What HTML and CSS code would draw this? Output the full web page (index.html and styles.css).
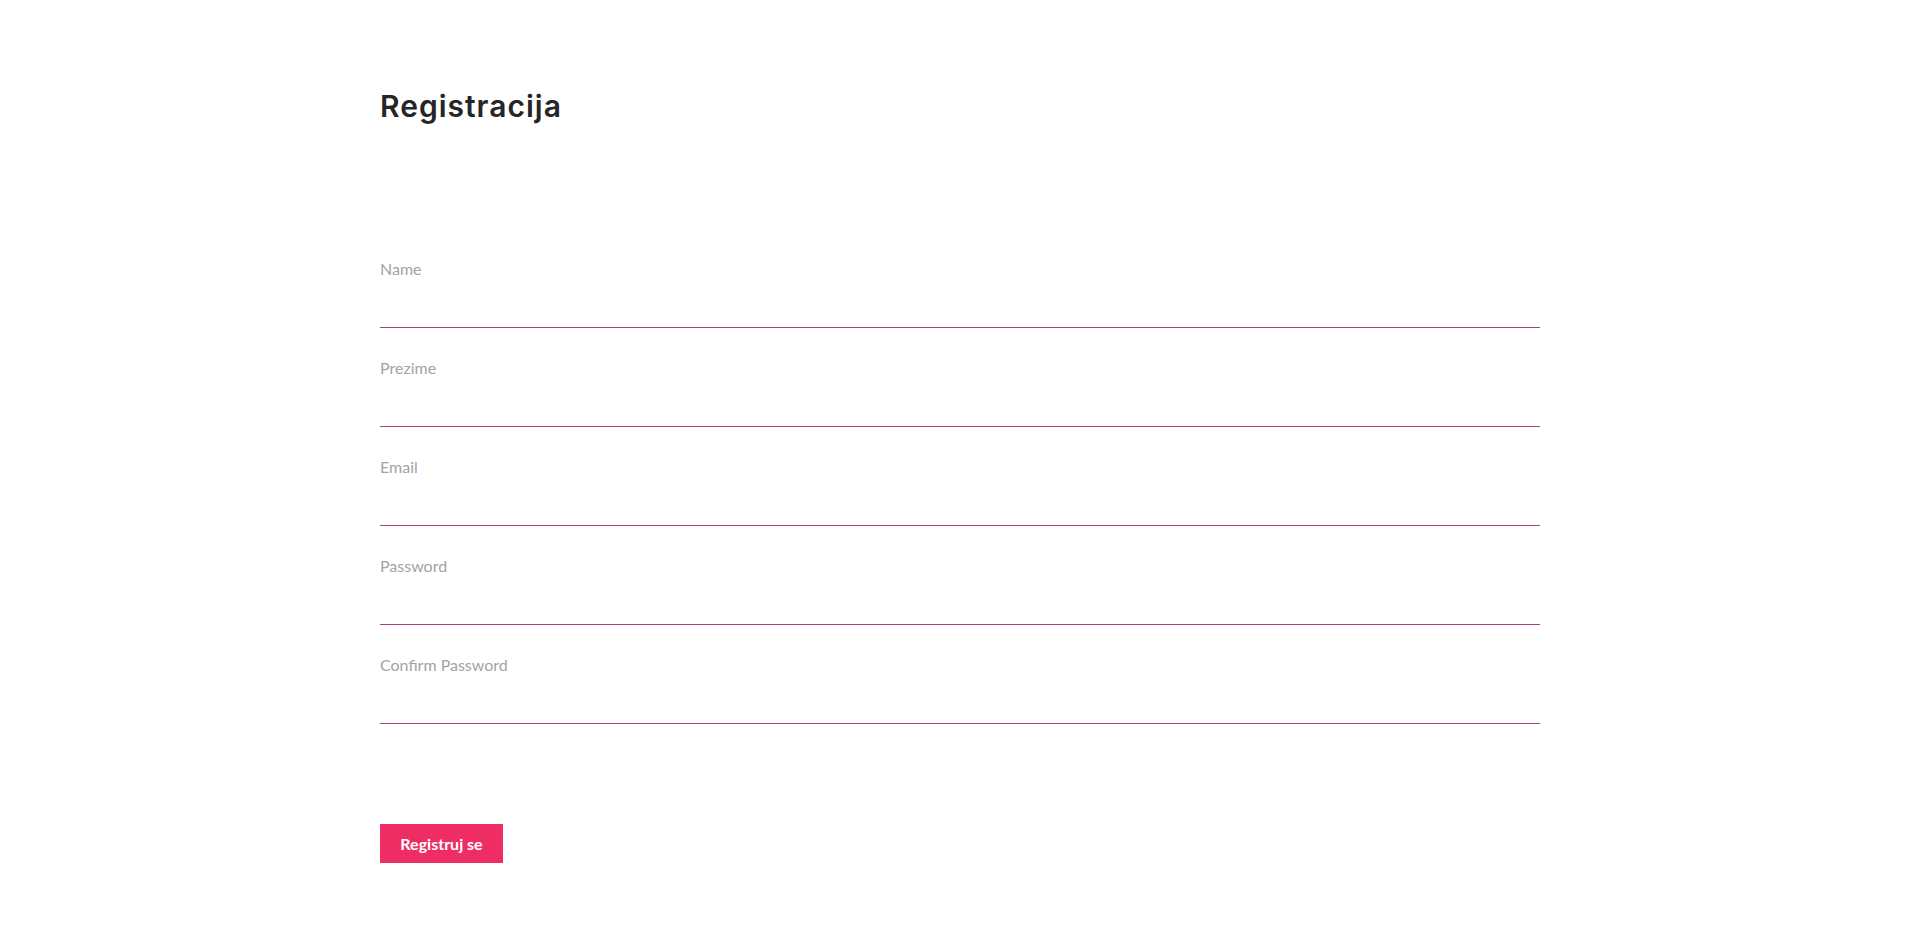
FILE: index.html
```html
<!DOCTYPE html>
<html lang="hr">
<head>
<meta charset="utf-8">
<title>Registracija</title>
<link rel="stylesheet" href="styles.css">
</head>
<body>
<main class="page">
  <h1 class="title">Registracija</h1>
  <form class="form">
    <div class="field">
      <label class="label" for="name">Name</label>
      <input class="input" id="name" type="text">
    </div>
    <div class="field">
      <label class="label" for="prezime">Prezime</label>
      <input class="input" id="prezime" type="text">
    </div>
    <div class="field">
      <label class="label" for="email">Email</label>
      <input class="input" id="email" type="email">
    </div>
    <div class="field">
      <label class="label" for="password">Password</label>
      <input class="input" id="password" type="password">
    </div>
    <div class="field">
      <label class="label" for="confirm">Confirm Password</label>
      <input class="input" id="confirm" type="password">
    </div>
    <button class="btn" type="button">Registruj se</button>
  </form>
</main>
</body>
</html>
```
FILE: styles.css
```css
html, body {
  margin: 0;
  padding: 0;
  background: #ffffff;
}
body {
  font-family: "Lato", "Liberation Sans", sans-serif;
}
.page {
  width: 1160px;
  margin: 0 auto;
  padding-top: 88px;
}
.title {
  margin: 0;
  font-family: "Inter", "Noto Sans", sans-serif;
  font-weight: 600;
  font-size: 30px;
  line-height: 36px;
  color: #262626;
  letter-spacing: 1px;
}
.form {
  display: flex;
  flex-direction: column;
  align-items: flex-start;
  margin-top: 135px;
}
.field {
  display: flex;
  flex-direction: column;
  width: 100%;
  margin-bottom: 30px;
}
.label {
  font-size: 16px;
  line-height: 20px;
  color: #a3a3a3;
}
.input {
  box-sizing: border-box;
  width: 100%;
  height: 49px;
  border: none;
  border-bottom: 1px solid #ab3f7f;
  outline: none;
  padding: 0;
  background: transparent;
  font-family: inherit;
  font-size: 16px;
}
.btn {
  margin-top: 70px;
  width: 123px;
  height: 39px;
  border: none;
  background: #ed2d64;
  color: #ffffff;
  font-family: "Lato", "Liberation Sans", sans-serif;
  font-weight: 700;
  font-size: 16px;
  padding: 0;
  cursor: pointer;
}
```
